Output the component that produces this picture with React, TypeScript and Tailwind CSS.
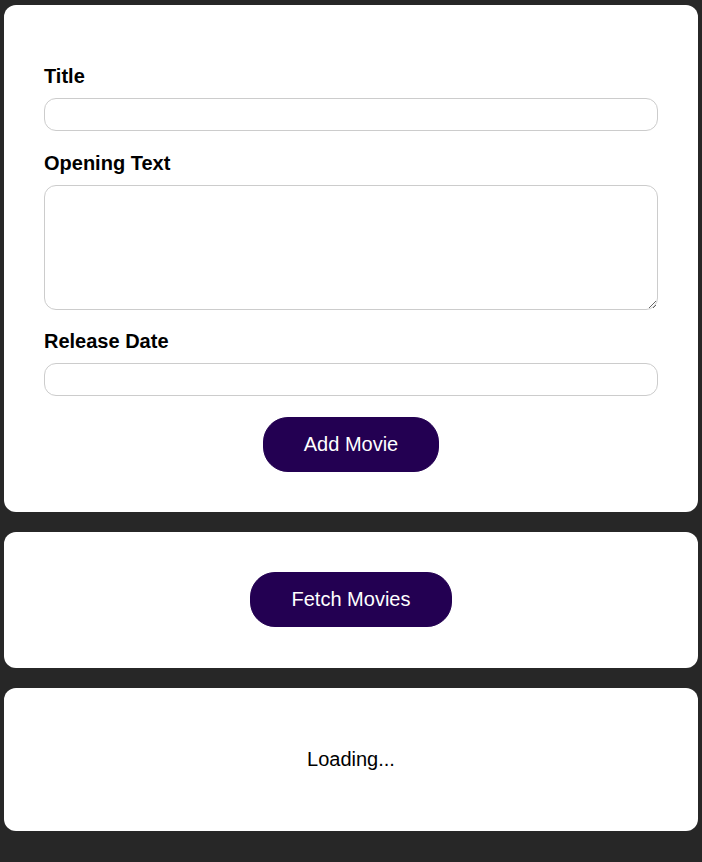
import React from 'react'

const fieldClass =
  'block w-full rounded-[12px] border border-[#cccccc] bg-white px-1 py-1 text-[20px] leading-[23px] outline-none'

const labelClass = 'mb-[10px] block text-[20px] font-bold leading-[23px]'

const buttonClass =
  'rounded-[25px] border border-[#230052] bg-[#230052] py-[15px] text-[20px] leading-[23px] text-white'

const App = () => {
  return (
    <div
      className="min-h-screen bg-[#272727] pt-[5px] pb-[31px] text-black"
      style={{ fontFamily: '"Liberation Sans", Arial, sans-serif' }}
    >
      <section className="mx-[4px] rounded-[12px] bg-white px-[40px] pt-[60px] pb-[40px]">
        <form onSubmit={(e) => e.preventDefault()}>
          <div className="mb-[21px]">
            <label htmlFor="title" className={labelClass}>
              Title
            </label>
            <input id="title" type="text" className={fieldClass} />
          </div>

          <div className="mb-[20px]">
            <label htmlFor="opening-text" className={labelClass}>
              Opening Text
            </label>
            <textarea id="opening-text" rows={5} className={`${fieldClass} h-[125px]`} />
          </div>

          <div className="mb-[21px]">
            <label htmlFor="date" className={labelClass}>
              Release Date
            </label>
            <input id="date" type="text" className={fieldClass} />
          </div>

          <div className="flex justify-center">
            <button type="submit" className={`${buttonClass} px-[40px]`}>
              Add Movie
            </button>
          </div>
        </form>
      </section>

      <section className="mx-[4px] mt-[20px] flex justify-center rounded-[12px] bg-white pt-[40px] pb-[41px]">
        <button className={`${buttonClass} px-[41px]`}>Fetch Movies</button>
      </section>

      <section className="mx-[4px] mt-[20px] rounded-[12px] bg-white py-[60px] text-center">
        <p className="text-[20px] leading-[23px]">Loading...</p>
      </section>
    </div>
  )
}

export default App
